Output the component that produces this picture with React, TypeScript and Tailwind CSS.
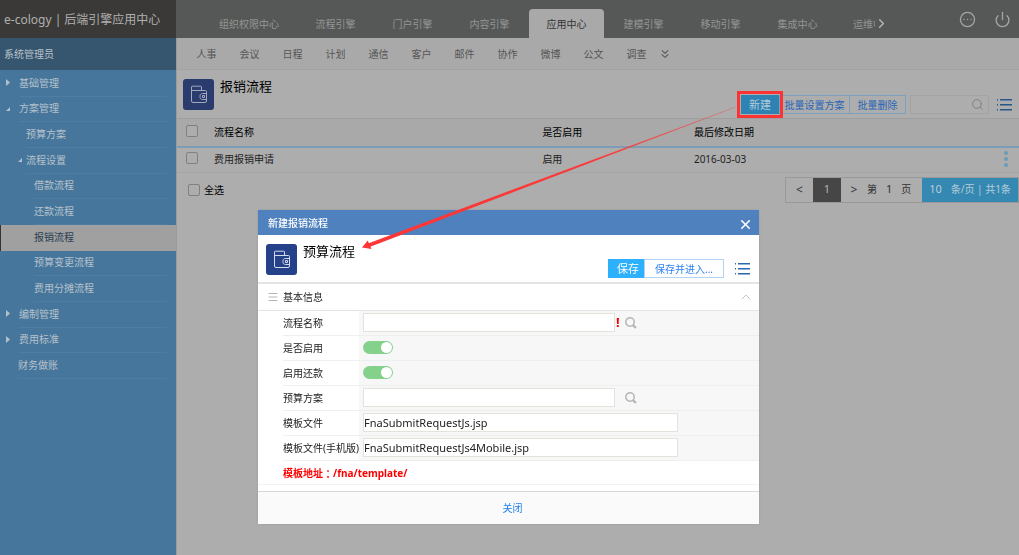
import React from 'react';
import { ChevronRight, ChevronUp, ChevronsDown, CircleEllipsis, Menu, Power, Search, X } from 'lucide-react';

type NavNode = { label: string; indent: string; marker?: 'closed' | 'open' | 'nested'; active?: boolean };

const navNodes: NavNode[] = [
  { label: '基础管理', indent: 'ml-[19px]', marker: 'closed' },
  { label: '方案管理', indent: 'ml-[19px]', marker: 'open' },
  { label: '预算方案', indent: 'ml-[26px]' },
  { label: '流程设置', indent: 'ml-[26px]', marker: 'nested' },
  { label: '借款流程', indent: 'ml-[34px]' },
  { label: '还款流程', indent: 'ml-[34px]' },
  { label: '报销流程', indent: 'ml-[34px]', active: true },
  { label: '预算变更流程', indent: 'ml-[34px]' },
  { label: '费用分摊流程', indent: 'ml-[34px]' },
  { label: '编制管理', indent: 'ml-[19px]', marker: 'closed' },
  { label: '费用标准', indent: 'ml-[19px]', marker: 'closed' },
  { label: '财务做账', indent: 'ml-[18px]' },
];

const engines = ['流程引擎', '门户引擎', '内容引擎', '应用中心', '建模引擎', '移动引擎', '集成中心'];
const modules = ['人事', '会议', '日程', '计划', '通信', '客户', '邮件', '协作', '微博', '公文', '调查'];

function Marker({ kind }: { kind: 'closed' | 'open' | 'nested' }) {
  return kind === 'closed' ? (
    <svg className="absolute -left-[13px] top-1/2 -mt-[4px] h-[7px] w-[4px]" viewBox="0 0 4 7">
      <path d="M0 0 4 3.5 0 7Z" fill="#b4c0c9" />
    </svg>
  ) : (
    <svg
      className={`absolute top-1/2 -mt-[2px] size-[4px] ${kind === 'nested' ? '-left-[8px]' : '-left-[13px]'}`}
      viewBox="0 0 5 5"
    >
      <path d="M5 0V5H0Z" fill="#b4c0c9" />
    </svg>
  );
}

function WalletTile({ tone, line }: { tone: string; line: string }) {
  return (
    <div className={`flex size-[31px] shrink-0 items-center justify-center rounded-[3px] ${tone}`}>
      <svg className="size-[19px]" viewBox="0 0 19 19" fill="none" stroke={line} strokeWidth="1">
        <path d="M2.500 6V2a.8.8 0 0 1 .8-.8H11.700a.8.8 0 0 1 .8.8V5.500M2.500 5.500H16.500a1 1 0 0 1 1 1V16a1.500 1.500 0 0 1-1.500 1.500H4A1.500 1.500 0 0 1 2.500 16V5.500" />
        <path d="M17.500 8.500H13.500a2.500 2.500 0 0 0-2.500 3 2.500 2.500 0 0 0 2.500 3h4M13.500 10.500h2v2h-2z" />
      </svg>
    </div>
  );
}

function ListIcon({ color }: { color: string }) {
  return (
    <svg className="h-[14px] w-[16px]" viewBox="0 0 16 14" fill={color}>
      <path d="M0 1h1v1.500H0zM3 1h12v1.500H3zM0 6h1v1.500H0zM3 6h12v1.500H3zM0 11h1v1.500H0zM3 11h12v1.500H3z" />
    </svg>
  );
}

const checkbox = 'block size-[12px] appearance-none rounded-[2px] border border-[#808080] bg-[#adadad] checked:bg-[#2f83b3]';

function Sidebar() {
  return (
    <aside className="w-[176px] shrink-0 bg-[#46769c] text-[10px] text-[#b6c1ca]">
      <h2 className="flex h-[32px] items-center bg-[#36566f] pt-px pl-1 text-[10px]">系统管理员</h2>
      <nav className="grid h-[309px] auto-rows-fr pt-px">
        {navNodes.map((n) => (
          <a
            key={n.label}
            href="#"
            className={
              n.active
                ? 'flex border-l border-[#333] bg-[#a0a0a0] text-[#2a4154]'
                : 'flex border-l border-transparent pr-2'
            }
          >
            <span
              className={`relative -left-px flex flex-1 items-center ${n.indent} ${n.active ? '' : 'border-b border-[#4d7da4]'}`}
            >
              {n.marker && <Marker kind={n.marker} />}
              {n.label}
            </span>
          </a>
        ))}
      </nav>
    </aside>
  );
}

function TopBar() {
  return (
    <header className="flex h-[38px] bg-[#565857] text-[10px] text-[#949594]">
      <div className="flex w-[176px] shrink-0 items-center bg-[#3a3937] pt-px pl-1 text-[12px] whitespace-nowrap text-[#b0b0b0]">
        e-cology | 后端引擎应用中心
      </div>
      <nav className="ml-[25px] flex flex-1 pt-[9px] whitespace-nowrap">
        <a href="#" className="flex w-[96px] items-center justify-center pt-px">组织权限中心</a>
        {engines.map((e) => (
          <a
            key={e}
            href="#"
            className={
              e === '应用中心'
                ? 'mx-px flex w-[75px] items-center justify-center rounded-t-[4px] bg-[#a9a9a9] pt-px text-[#333]'
                : 'flex w-[77px] items-center justify-center pt-px'
            }
          >
            {e}
          </a>
        ))}
        <a href="#" className="ml-[17px] flex w-[22px] items-center overflow-hidden pt-px">运维中心</a>
        <button type="button" aria-label="更多" className="-ml-px">
          <ChevronRight className="size-[15px] text-[#b0b0b0]" strokeWidth={2.500} />
        </button>
      </nav>
      <div className="flex items-center gap-[18px] pr-[8px] text-[#a6a6a6]">
        <button type="button" aria-label="消息"><CircleEllipsis className="size-[17px]" strokeWidth={1.800} /></button>
        <button type="button" aria-label="退出"><Power className="size-[17px]" strokeWidth={1.800} /></button>
      </div>
    </header>
  );
}

function Toolbar() {
  return (
    <div className="flex h-[49px] items-end border-b border-[#9e9e9e] pr-[6px] pl-[6px] text-[10px]">
      <div className="flex flex-1 gap-[6px] self-start pt-[9px]">
        <WalletTile tone="bg-[#2a3b6e]" line="#a3a9bd" />
        <h1 className="-mt-[2px] text-[13px] leading-[18px] text-black">报销流程</h1>
      </div>
      <div className="mb-[4px] flex h-[19px] items-stretch text-[#2766b8]">
        <div className="relative flex">
          <button type="button" className="w-[38px] bg-[#2f83b3] pt-px text-[11px] text-[#b3cad8]">新建</button>
          <span className="pointer-events-none absolute -inset-[4px] border-3 border-[#fb3333]" />
        </div>
        <button type="button" className="w-[71px] border border-[#7ba0c0] pt-px whitespace-nowrap">批量设置方案</button>
        <button type="button" className="w-[56px] border border-l-0 border-[#7ba0c0] pt-px">批量删除</button>
        <label className="ml-[4px] flex w-[79px] items-center border border-[#a3a3a3] pr-1">
          <input type="search" aria-label="搜索" className="w-0 flex-1 bg-transparent px-1 outline-none" />
          <Search className="size-[13px] text-[#808080]" strokeWidth={1.800} />
        </label>
        <button type="button" aria-label="列表" className="ml-[8px]"><ListIcon color="#27568c" /></button>
      </div>
    </div>
  );
}

function FlowTable() {
  return (
    <table className="w-full table-fixed text-left text-[10px] text-[#222]">
      <thead>
        <tr className="h-[28px] border-b-2 border-[#7c9db5] bg-[#a9a9a9] text-black">
          <th className="w-[37px] pb-1 pl-[9px]"><input type="checkbox" aria-label="全部流程" className={checkbox} /></th>
          <th className="w-[39%] font-normal">流程名称</th>
          <th className="w-[18%] font-normal">是否启用</th>
          <th className="font-normal">最后修改日期</th>
          <th className="w-[40px]" aria-label="操作" />
        </tr>
      </thead>
      <tbody>
        <tr className="h-[25px] border-b border-[#a4a4a4]">
          <td className="pb-1 pl-[9px]"><input type="checkbox" aria-label="费用报销申请" className={checkbox} /></td>
          <td>费用报销申请</td>
          <td>启用</td>
          <td>2016-03-03</td>
          <td className="pb-[2px]">
            <button type="button" aria-label="更多操作" className="mr-[11px] ml-auto flex flex-col gap-[2px]">
              <span className="size-[4px] rounded-full bg-[#6d9ab8]" />
              <span className="size-[4px] rounded-full bg-[#6d9ab8]" />
              <span className="size-[4px] rounded-full bg-[#6d9ab8]" />
            </button>
          </td>
        </tr>
      </tbody>
    </table>
  );
}

function Pager() {
  return (
    <div className="flex items-center justify-between pt-[4px] text-[10px] text-[#222]">
      <label className="flex items-center gap-1 pl-[11px] text-black">
        <input type="checkbox" className={checkbox} />
        <span className="pt-px">全选</span>
      </label>
      <div className="flex h-[26px] items-stretch border border-[#999] text-[#333]">
        <button type="button" className="w-[27px] text-[12px]">&lt;</button>
        <button type="button" className="w-[28px] bg-[#464646] text-[11px] text-[#b5b5b5]">1</button>
        <button type="button" className="w-[26px] text-[12px]">&gt;</button>
        <span className="flex w-[55px] items-center gap-[9px]">
          <span>第</span>
          <span className="text-[11px]">1</span>
          <span>页</span>
        </span>
        <button type="button" className="flex w-[96px] items-center justify-center gap-[9px] bg-[#3488b2] whitespace-nowrap text-[#b8cdd8]">
          <span className="text-[11px]">10</span>
          <span>条/页 | 共1条</span>
        </button>
      </div>
    </div>
  );
}

function Magnifier() {
  return (
    <svg className="size-[12px]" viewBox="0 0 12 12" fill="none" stroke="#b5b5b5">
      <circle cx="5" cy="5" r="4.200" strokeWidth="1.500" />
      <path d="M8 8.300 11 10.800" strokeWidth="2.200" />
    </svg>
  );
}

function Field({ label, id, children }: { label: string; id: string; children: React.ReactNode }) {
  return (
    <div className="ml-[25px] flex h-[25px] border-b border-[#efefef]">
      <label htmlFor={id} className="flex w-[76px] shrink-0 items-center pt-px whitespace-nowrap">{label}</label>
      <div className="flex flex-1 items-center bg-[#f7f7f7] pb-px pl-[4px]">{children}</div>
    </div>
  );
}

const textBox = 'h-[19px] border border-[#e3e3dc] bg-white text-[11px] text-[#222] outline-none';
const toggle =
  "relative h-[13px] w-[30px] appearance-none rounded-full bg-[#c4c4c4] before:absolute before:top-px before:left-px before:size-[11px] before:rounded-full before:bg-white before:content-[''] checked:bg-[#84d18c] checked:before:left-[18px]";

function Dialog() {
  return (
    <section role="dialog" aria-label="新建报销流程" className="relative w-[501px] bg-white text-[10px] text-[#222] shadow-[0_0_2px_#999]">
      <div className="flex h-[25px] items-center justify-between bg-[#4e81bd] pr-[6px] pl-[10px] text-white">
        <h2 className="pt-px font-medium">新建报销流程</h2>
        <button type="button" aria-label="关闭窗口" className="mt-1"><X className="size-[15px]" strokeWidth={2.500} /></button>
      </div>
      <div className="flex h-[49px] items-end border-b-2 border-[#e4e4e4] pr-[8px] pl-[8px]">
        <div className="flex flex-1 gap-[6px] self-start pt-[9px]">
          <WalletTile tone="bg-[#24418a]" line="#d5dbea" />
          <h3 className="-mt-[2px] text-[13px] leading-[18px] text-black">预算流程</h3>
        </div>
        <div className="mb-[4px] flex h-[19px] text-[#2d7ff0]">
          <button type="button" className="w-[36px] bg-[#2db1fd] pt-px pl-1 text-[11px] text-white">保存</button>
          <button type="button" className="w-[80px] border border-[#b3d3f4] pt-px">保存并进入...</button>
          <button type="button" aria-label="列表" className="ml-[11px]"><ListIcon color="#2b68b0" /></button>
        </div>
      </div>
      <div className="flex h-[27px] items-center border-b border-[#e4e4e4] pr-[5px] pl-[9px]">
        <Menu className="size-[12px] text-[#b5b5b5]" strokeWidth={2} />
        <h4 className="ml-1 flex-1">基本信息</h4>
        <button type="button" aria-label="收起"><ChevronUp className="size-[16px] text-[#c4c4c4]" strokeWidth={1.500} /></button>
      </div>
      <Field label="流程名称" id="name">
        <input id="name" type="text" className={`w-[252px] ${textBox}`} />
        <span className="w-[10px] pl-px text-[13px] leading-none font-bold text-[#f00]">!</span>
        <button type="button" aria-label="查找流程"><Magnifier /></button>
      </Field>
      <Field label="是否启用" id="enabled">
        <input id="enabled" type="checkbox" role="switch" defaultChecked className={toggle} />
      </Field>
      <Field label="启用还款" id="repay">
        <input id="repay" type="checkbox" role="switch" defaultChecked className={toggle} />
      </Field>
      <Field label="预算方案" id="plan">
        <input id="plan" type="text" className={`w-[252px] ${textBox}`} />
        <button type="button" aria-label="查找方案" className="ml-[10px]"><Magnifier /></button>
      </Field>
      <Field label="模板文件" id="tpl">
        <input id="tpl" type="text" defaultValue="FnaSubmitRequestJs.jsp" className={`w-[315px] ${textBox}`} />
      </Field>
      <Field label="模板文件(手机版)" id="tplm">
        <input id="tplm" type="text" defaultValue="FnaSubmitRequestJs4Mobile.jsp" className={`w-[315px] ${textBox}`} />
      </Field>
      <p className="flex h-[24px] items-center border-b border-[#f2f2f2] pt-px pl-[25px] font-bold text-[#f00]">
        模板地址<span className="font-['Noto_Sans_CJK_TC',sans-serif]">：</span>/fna/template/
      </p>
      <div className="mt-[6px] flex h-[33px] items-center justify-center border-t border-[#d8d8d8] bg-[#fafafa] pl-2">
        <button type="button" className="text-[#2080f5]">关闭</button>
      </div>
      <svg className="pointer-events-none absolute -top-[110px] left-[100px] h-[152px] w-[380px]" viewBox="0 0 380 152">
        <defs>
          <linearGradient id="shaft" x1="0" x2="1" y1="0" y2="0">
            <stop offset="0" stopColor="#fb3737" />
            <stop offset="0.6" stopColor="#fb3737" />
            <stop offset="1" stopColor="#fb3737" stopOpacity="0.5" />
          </linearGradient>
        </defs>
        <path d="M377 7 10 143.500 11.500 147 377 7.600Z" fill="url(#shaft)" />
        <path d="M4 147.500 9.700 140.500 13.500 149Z" fill="#fb3737" />
      </svg>
    </section>
  );
}

export default function App() {
  return (
    <div className="flex min-h-screen flex-col bg-[#adadad] font-['Noto_Sans','Noto_Sans_CJK_SC',sans-serif]">
      <TopBar />
      <div className="flex flex-1">
        <Sidebar />
        <main className="min-w-0 flex-1 border-l border-[#9a9a9a]">
          <nav className="flex h-[32px] items-center border-b border-[#a2a2a2] bg-[#a9a9a9] pt-px pl-[8px] text-[10px] text-[#555]">
            {modules.map((m) => (
              <a key={m} href="#" className="w-[43px] text-center">{m}</a>
            ))}
            <button type="button" aria-label="展开"><ChevronsDown className="size-[14px]" strokeWidth={1.800} /></button>
          </nav>
          <Toolbar />
          <FlowTable />
          <Pager />
        </main>
      </div>
      <div className="fixed inset-0 flex items-start justify-center pt-[210px] pr-[2px]">
        <Dialog />
      </div>
    </div>
  );
}
